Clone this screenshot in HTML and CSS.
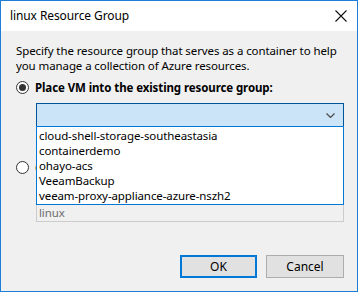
FILE: index.html
```html
<!DOCTYPE html>
<html>
<head>
<meta charset="utf-8">
<link rel="stylesheet" href="styles.css">
</head>
<body>
<div class="window">
  <div class="titlebar">
    <span class="title">linux Resource Group</span>
    <svg class="close" width="12" height="12" viewBox="0 0 12 12"><path d="M0.5 0.5 L11.5 11.5 M11.5 0.5 L0.5 11.5" stroke="#111" stroke-width="1.1" fill="none"/></svg>
  </div>
  <div class="content">
    <p class="desc">Specify the resource group that serves as a container to help you manage a collection of Azure resources.</p>
    <div class="radio-row first">
      <span class="radio checked"></span>
      <span class="label bold">Place VM into the existing resource group:</span>
    </div>
    <div class="combo-wrap">
      <div class="combo">
        <svg class="chev" width="9" height="5" viewBox="0 0 9 5"><path d="M0.5 0.5 L4.5 4.5 L8.5 0.5" stroke="#444" stroke-width="1.1" fill="none"/></svg>
      </div>
      <ul class="list">
        <li>cloud-shell-storage-southeastasia</li>
        <li>containerdemo</li>
        <li>ohayo-acs</li>
        <li>VeeamBackup</li>
        <li>veeam-proxy-appliance-azure-nszh2</li>
      </ul>
    </div>
    <div class="radio-row second">
      <span class="radio"></span>
      <span class="label">Create a new resource group:</span>
    </div>
    <div class="textbox">linux</div>
    <div class="buttons">
      <button class="btn default">OK</button>
      <button class="btn">Cancel</button>
    </div>
  </div>
</div>
</body>
</html>
```
FILE: styles.css
```css
* { box-sizing: border-box; }
html, body { margin: 0; padding: 0; }
body {
  font-family: "Noto Sans", "Open Sans", sans-serif;
  font-size: 11.5px;
  letter-spacing: -0.1px;
  color: #000;
  background: #fff;
}
.window {
  width: 358px;
  height: 292px;
  border: 1px solid #1c7ed6;
  display: flex;
  flex-direction: column;
  background: #f0f0f0;
}
.titlebar {
  height: 30px;
  background: #fff;
  display: flex;
  align-items: center;
  justify-content: space-between;
  padding: 0 10px 0 9px;
  flex: none;
}
.title { font-size: 12px; line-height: 15px; margin-top: -1px; }
.close { margin-top: -1px; }
.content {
  flex: 1;
  display: flex;
  flex-direction: column;
  padding: 12px 13px 13px 15px;
}
.desc {
  margin: 0;
  line-height: 15px;
}
.radio-row {
  display: flex;
  align-items: center;
  height: 15px;
  line-height: 15px;
}
.radio-row.first { margin-top: 7px; }
.radio-row.second { margin-top: 33px; }
.radio {
  width: 13px;
  height: 13px;
  border: 1px solid #333;
  border-radius: 50%;
  background: #fff;
  display: flex;
  align-items: center;
  justify-content: center;
  margin-right: 6px;
  flex: none;
}
.radio.checked::after {
  content: "";
  width: 7px;
  height: 7px;
  border-radius: 50%;
  background: #333;
}
.bold { font-weight: bold; }
.combo-wrap {
  position: relative;
  margin: 8px 0 0 20px;
}
.combo {
  height: 24px;
  background: #cce4f7;
  border: 1px solid #005499;
  display: flex;
  align-items: center;
  justify-content: flex-end;
  padding-right: 8px;
}
.list {
  position: absolute;
  left: 0;
  right: 0;
  top: 23px;
  margin: 0;
  padding: 1px 0;
  list-style: none;
  background: #fff;
  border: 1px solid #0078d7;
  z-index: 2;
}
.list li {
  height: 15px;
  line-height: 15px;
  padding-left: 2px;
}
.textbox {
  margin: 24px 0 0 20px;
  height: 23px;
  border: 1px solid #ccc;
  color: #6d6d6d;
  padding: 5px 0 0 2px;
  line-height: 15px;
}
.buttons {
  margin-top: auto;
  display: flex;
  justify-content: flex-end;
  gap: 9px;
}
.btn {
  font-family: inherit;
  font-size: 12px;
  width: 78px;
  height: 23px;
  background: #e1e1e1;
  border: 1px solid #adadad;
  padding: 0;
  color: #000;
}
.btn.default {
  border: 2px solid #0078d7;
  width: 77px;
}
```
